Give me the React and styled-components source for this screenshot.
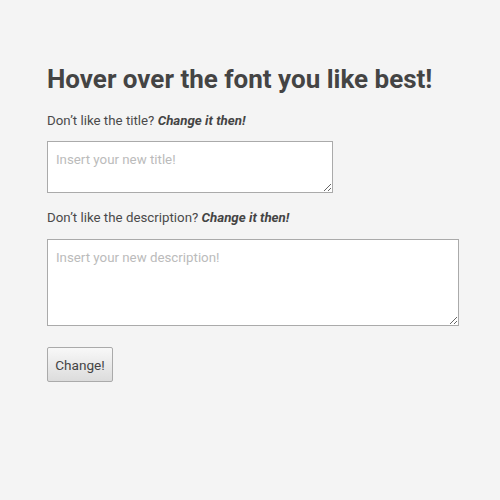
import React from 'react';
import styled, { createGlobalStyle } from 'styled-components';

const GlobalStyle = createGlobalStyle`
  html, body {
    margin: 0;
    padding: 0;
    background: #f4f4f4;
  }
  body {
    font-family: Roboto, "Liberation Sans", sans-serif;
    color: #444;
  }
`;

const Page = styled.div`
  padding: 62px 47px 40px;
  display: flex;
  flex-direction: column;
  align-items: flex-start;
`;

const Title = styled.h1`
  margin: 0 0 16px;
  font-size: 26px;
  line-height: 34px;
  font-weight: 700;
  color: #444;
`;

const Label = styled.p`
  margin: 0 0 ${p => p.$gap}px;
  font-size: 13.3px;
  line-height: 18px;
  color: #4a4a4a;

  em {
    font-weight: 700;
    font-style: italic;
    color: #444;
  }
`;

const Field = styled.textarea`
  box-sizing: border-box;
  width: ${p => p.$width}px;
  height: ${p => p.$height}px;
  margin: 0 0 ${p => p.$gap}px;
  padding: 10px 8px 8px;
  border: 1px solid #aaa;
  background: #fff;
  font-family: Roboto, "Liberation Sans", sans-serif;
  font-size: 13.3px;
  color: #444;
  resize: both;

  &::placeholder {
    color: #bbb;
  }
`;

const Button = styled.button`
  height: 35px;
  width: 66px;
  padding: 0 6px;
  border: 1px solid #aaa;
  border-radius: 2px;
  background: linear-gradient(#f8f8f8, #dcdcdc);
  font-family: Roboto, "Liberation Sans", sans-serif;
  font-size: 13.6px;
  color: #444;
  cursor: pointer;
`;

export default function App() {
  return (
    <>
      <GlobalStyle />
      <Page>
        <Title>Hover over the font you like best!</Title>
        <Label $gap={11}>Don’t like the title? <em>Change it then!</em></Label>
        <Field $width={286} $height={52} $gap={16} placeholder="Insert your new title!" />
        <Label $gap={12}>Don’t like the description? <em>Change it then!</em></Label>
        <Field $width={412} $height={87} $gap={21} placeholder="Insert your new description!" />
        <Button>Change!</Button>
      </Page>
    </>
  );
}
